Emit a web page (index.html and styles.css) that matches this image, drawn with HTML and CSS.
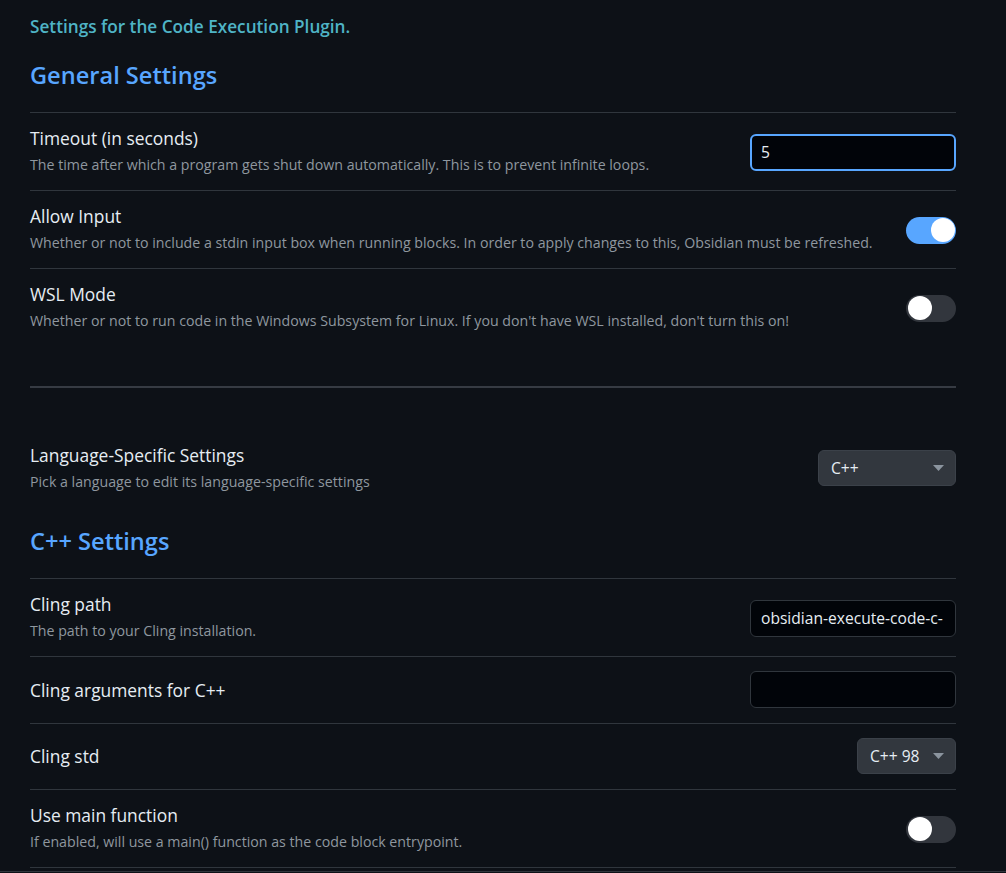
FILE: index.html
```html
<!DOCTYPE html>
<html lang="en">
<head>
<meta charset="utf-8">
<title>Code Execution Settings</title>
<link rel="stylesheet" href="styles.css">
</head>
<body>
<div class="page">
  <p class="intro">Settings for the Code Execution Plugin.</p>
  <h2 class="section-title">General Settings</h2>

  <div class="setting">
    <div class="info">
      <div class="name">Timeout (in seconds)</div>
      <div class="desc">The time after which a program gets shut down automatically. This is to prevent infinite loops.</div>
    </div>
    <div class="control"><input class="text-input focused" type="text" value="5" autofocus></div>
  </div>

  <div class="setting">
    <div class="info">
      <div class="name">Allow Input</div>
      <div class="desc">Whether or not to include a stdin input box when running blocks. In order to apply changes to this, Obsidian must be refreshed.</div>
    </div>
    <div class="control"><span class="toggle on"><span class="knob"></span></span></div>
  </div>

  <div class="setting">
    <div class="info">
      <div class="name">WSL Mode</div>
      <div class="desc">Whether or not to run code in the Windows Subsystem for Linux. If you don't have WSL installed, don't turn this on!</div>
    </div>
    <div class="control"><span class="toggle"><span class="knob"></span></span></div>
  </div>

  <hr class="divider">

  <div class="setting no-border">
    <div class="info">
      <div class="name">Language-Specific Settings</div>
      <div class="desc">Pick a language to edit its language-specific settings</div>
    </div>
    <div class="control flush">
      <div class="dropdown wide">
        <span class="dropdown-value">C++</span>
        <svg class="caret" width="11" height="6" viewBox="0 0 11 6"><path d="M0 0H11L5.5 6Z" fill="#8b949e"/></svg>
      </div>
    </div>
  </div>

  <h2 class="section-title second">C++ Settings</h2>

  <div class="setting">
    <div class="info">
      <div class="name">Cling path</div>
      <div class="desc">The path to your Cling installation.</div>
    </div>
    <div class="control"><input class="text-input" type="text" value="obsidian-execute-code-c-"></div>
  </div>

  <div class="setting compact">
    <div class="info">
      <div class="name">Cling arguments for C++</div>
    </div>
    <div class="control"><input class="text-input" type="text" value=""></div>
  </div>

  <div class="setting compact">
    <div class="info">
      <div class="name">Cling std</div>
    </div>
    <div class="control">
      <div class="dropdown">
        <span class="dropdown-value">C++ 98</span>
        <svg class="caret" width="11" height="6" viewBox="0 0 11 6"><path d="M0 0H11L5.5 6Z" fill="#8b949e"/></svg>
      </div>
    </div>
  </div>

  <div class="setting last">
    <div class="info">
      <div class="name">Use main function</div>
      <div class="desc">If enabled, will use a main() function as the code block entrypoint.</div>
    </div>
    <div class="control"><span class="toggle"><span class="knob"></span></span></div>
  </div>
</div>
<div class="bottom-edge"></div>
</body>
</html>
```

FILE: styles.css
```css
html, body {
  margin: 0;
  padding: 0;
  background: #0d1117;
  height: 873px;
  overflow: hidden;
}

body {
  font-family: "Open Sans", "Noto Sans", sans-serif;
  color: #e6edf3;
}

.page {
  padding: 0 50px 0 30px;
  height: 871px;
  overflow: hidden;
}

.intro {
  margin: 15px 0 0;
  font-size: 17.2px;
  line-height: 24px;
  font-weight: 600;
  color: #4fb4c6;
}

.section-title {
  margin: 20px 0 21px;
  font-size: 23.6px;
  line-height: 32px;
  font-weight: 600;
  color: #58a6ff;
}

.section-title.second {
  margin: 18px 0 21px;
}

.setting {
  display: flex;
  align-items: center;
  justify-content: space-between;
  gap: 20px;
  border-top: 1px solid #30363d;
  padding: 13px 0 15px;
}

.setting.no-border {
  border-top: none;
}

.setting.compact {
  padding: 14px 0 15px;
}

.setting.last {
  border-bottom: 1px solid #30363d;
}

.info {
  display: flex;
  flex-direction: column;
  gap: 5px;
  min-width: 0;
}

.name {
  font-size: 17.4px;
  line-height: 24px;
  color: #e6edf3;
}

.desc {
  font-size: 14.2px;
  line-height: 20px;
  color: #8f979f;
}

.control {
  flex: none;
  display: flex;
  align-items: center;
  margin-top: 3px;
}

.control.flush {
  margin-top: 0;
}

.setting.compact .control {
  margin-top: 0;
}

.text-input {
  box-sizing: border-box;
  width: 206px;
  height: 37px;
  padding: 0 10px;
  background: #010409;
  border: 1px solid #30363d;
  border-radius: 6px;
  color: #e6edf3;
  font-family: "Open Sans", "Noto Sans", sans-serif;
  font-size: 15.6px;
  outline: none;
}

.text-input.focused {
  border: 2px solid #58a6ff;
  padding: 0 9px;
}

.toggle {
  position: relative;
  display: block;
  width: 50px;
  height: 27px;
  border-radius: 14px;
  background: #32363d;
}

.toggle.on {
  background: #58a6ff;
}

.knob {
  position: absolute;
  top: 1.5px;
  left: 1.5px;
  width: 24px;
  height: 24px;
  border-radius: 50%;
  background: #ffffff;
}

.toggle.on .knob {
  left: auto;
  right: 1.5px;
}

.dropdown {
  box-sizing: border-box;
  display: flex;
  align-items: center;
  justify-content: space-between;
  gap: 10px;
  width: 99px;
  height: 36px;
  padding: 0 11px 0 12px;
  background: #32373e;
  border: 1px solid #3b4149;
  border-radius: 6px;
  color: #e6edf3;
  font-size: 15.6px;
}

.dropdown.wide {
  width: 138px;
}

.caret {
  display: block;
  flex: none;
}

.divider {
  margin: 40px 0 42px;
  border: none;
  height: 2px;
  background: #363b43;
}

.bottom-edge {
  height: 1px;
  background: #30363d;
}
```
